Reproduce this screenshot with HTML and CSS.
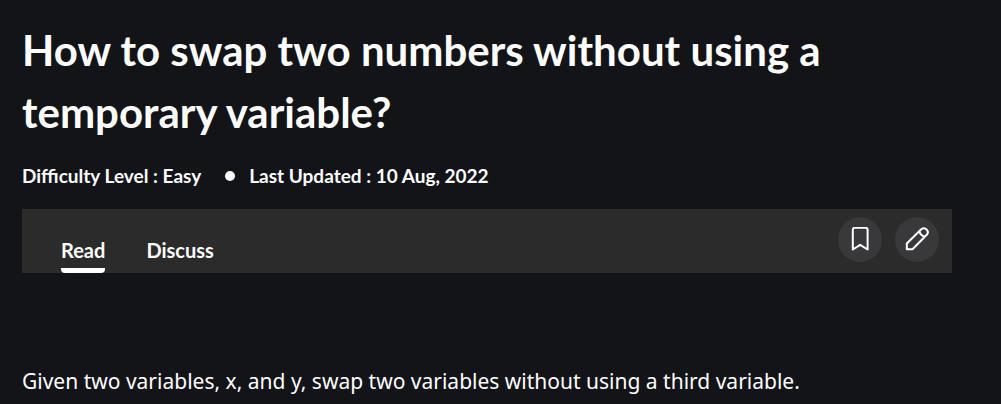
FILE: index.html
```html
<!DOCTYPE html>
<html lang="en">
<head>
<meta charset="utf-8">
<meta name="viewport" content="width=device-width, initial-scale=1">
<title>How to swap two numbers without using a temporary variable?</title>
<link rel="stylesheet" href="styles.css">
</head>
<body>
<main class="article">
  <h1 class="title">How to swap two numbers without using a temporary variable?</h1>
  <ul class="meta">
    <li>Difficulty Level : Easy</li>
    <li class="updated">Last Updated : 10 Aug, 2022</li>
  </ul>
  <div class="toolbar">
    <nav class="tabs">
      <a class="tab active" href="#read">Read</a>
      <a class="tab" href="#discuss">Discuss</a>
    </nav>
    <div class="actions">
      <button class="action" type="button" aria-label="Bookmark">
        <svg viewBox="0 0 24 24" aria-hidden="true"><path d="M4.800 2.800a2 2 0 0 1 2-2h10.800a2 2 0 0 1 2 2v19.700l-7.400-4.700-7.400 4.700z"/></svg>
      </button>
      <button class="action" type="button" aria-label="Edit">
        <svg viewBox="0 0 24 24" aria-hidden="true"><path d="M1.800 22.300v-5.800L16 2.500c3.700-3.700 9.200 1.800 5.500 5.500L7.500 22.300zM14.500 4.200c.5 3 2.300 4.800 5.300 5.300"/></svg>
      </button>
    </div>
  </div>
  <p class="text" id="read">Given two variables, x, and y, swap two variables without using a third variable.</p>
</main>
</body>
</html>
```

FILE: styles.css
```css
body {
  margin: 0;
  background: #131417;
  color: #fff;
  font-family: Lato, "Open Sans", sans-serif;
}
.article {
  padding: 19px 49px 0 22px;
}
.title {
  margin: 0;
  font-size: 42px;
  line-height: 62px;
  font-weight: 700;
}
.meta {
  display: flex;
  gap: 24px;
  margin: 18px 0 19px;
  padding: 0;
  list-style: none;
  font-size: 19px;
  line-height: 29px;
  font-weight: 700;
}
.updated {
  display: flex;
  align-items: center;
  gap: 14px;
}
.updated::before {
  content: "";
  width: 10px;
  height: 10px;
  border-radius: 50%;
  background: #fff;
}
.toolbar {
  display: flex;
  justify-content: space-between;
  height: 64px;
  padding: 0 13px 0 39px;
  background: #2b2b2b;
}
.tabs {
  display: flex;
  align-items: flex-end;
  gap: 41px;
}
.tab {
  padding-bottom: 6px;
  border-bottom: 5px solid transparent;
  color: #fff;
  font-size: 20px;
  line-height: 24px;
  font-weight: 700;
  text-decoration: none;
}
.active {
  border-color: #fff;
  border-radius: 0 0 4px 4px;
}
.actions {
  display: flex;
  gap: 13px;
  padding-top: 8px;
}
.action {
  display: grid;
  place-items: center;
  width: 44px;
  height: 45px;
  padding: 0 0 2px;
  border: 0;
  border-radius: 50%;
  background: #39393b;
}
.action svg {
  width: 24px;
  height: 24px;
  fill: none;
  stroke: #fff;
  stroke-width: 2;
  stroke-linejoin: round;
}
.text {
  margin: 92px 0 0;
  font-family: "Noto Sans", sans-serif;
  font-size: 21px;
  line-height: 32px;
}
```
